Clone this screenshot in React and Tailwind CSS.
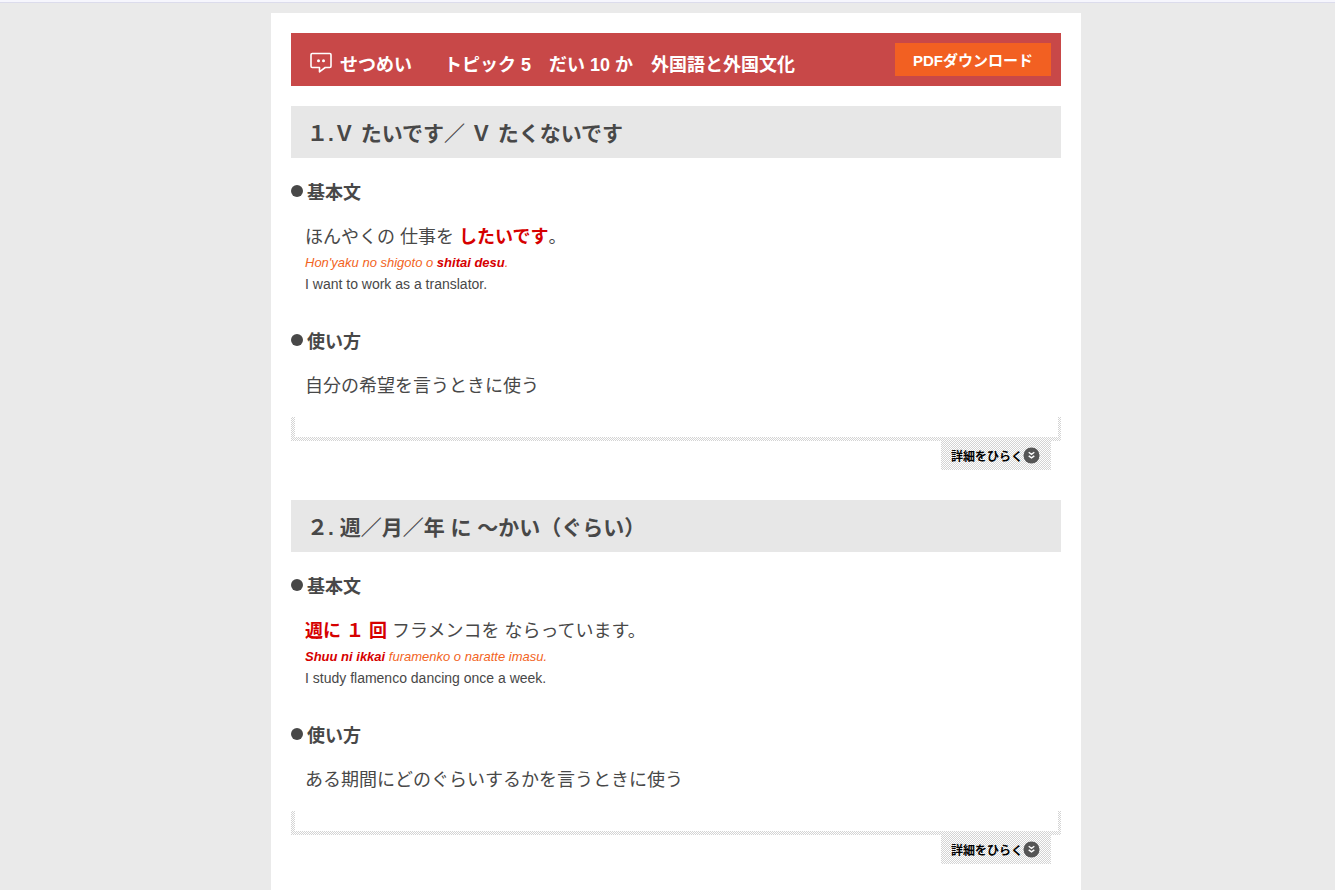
const lessons = [
  {
    id: "tai",
    title: "１.Ｖ たいです／ Ｖ たくないです",
    sentence: (
      <>
        ほんやくの 仕事を <b className="text-[#d60000]">したいです</b>。
      </>
    ),
    romaji: (
      <>
        Hon'yaku no shigoto o <b className="text-[#d60000]">shitai desu</b>.
      </>
    ),
    english: "I want to work as a translator.",
    usage: "自分の希望を言うときに使う",
  },
  {
    id: "kai",
    title: "２. 週／月／年 に ～かい（ぐらい）",
    sentence: (
      <>
        <b className="text-[#d60000]">週に １ 回</b> フラメンコを ならっています。
      </>
    ),
    romaji: (
      <>
        <b className="text-[#d60000]">Shuu ni ikkai</b> furamenko o naratte imasu.
      </>
    ),
    english: "I study flamenco dancing once a week.",
    usage: "ある期間にどのぐらいするかを言うときに使う",
  },
];

const checker =
  "bg-[conic-gradient(#d4d4d4_25%,#fff_0_50%,#d4d4d4_0_75%,#fff_0)] bg-[size:2px_2px]";

function SpeechIcon() {
  return (
    <svg viewBox="0 0 22 22" className="mt-2 h-[22px] w-[22px] shrink-0" aria-hidden="true">
      <path
        d="M2.2 2.500h17.6a1.200 1.200 0 0 1 1.200 1.200v11.600a1.200 1.200 0 0 1-1.200 1.200h-4.600L9.500 20.800V16.500H2.200A1.200 1.200 0 0 1 1 15.300V3.700A1.200 1.200 0 0 1 2.200 2.500z"
        fill="none"
        stroke="#fff"
        strokeWidth="1.6"
        strokeLinejoin="round"
      />
      <circle cx="8.500" cy="9.700" r="1.500" fill="#fff" />
      <circle cx="13.500" cy="9.700" r="1.500" fill="#fff" />
    </svg>
  );
}

function OpenIcon() {
  return (
    <svg viewBox="0 0 17 17" className="h-[17px] w-[17px] shrink-0" aria-hidden="true">
      <circle cx="8.500" cy="8.500" r="8" fill="#555" />
      <path
        d="M5.700 5.300 8.500 7.300l2.800-2M5.700 8.900l2.800 2 2.800-2"
        fill="none"
        stroke="#fff"
        strokeWidth="1.4"
      />
    </svg>
  );
}

function SubHeading({ children }) {
  return (
    <h3 className="flex items-start gap-1 text-[18px] leading-[31px] font-bold">
      <span className="mt-[7px] h-3 w-3 rounded-full bg-[#484848]" />
      {children}
    </h3>
  );
}

function Lesson({ lesson }) {
  return (
    <section className="mb-[30px]">
      <h2 className="bg-[#e7e7e7] px-4 pt-3 pb-2 text-[21px] leading-8 font-bold">{lesson.title}</h2>

      <div className="mt-5">
        <SubHeading>基本文</SubHeading>
        <div className="mt-[15px] px-[14px]">
          <p className="text-[18px] leading-[27px]">{lesson.sentence}</p>
          <p className="text-[13px] leading-6 text-[#f26322] italic">{lesson.romaji}</p>
          <p className="text-[14px] leading-[18px]">{lesson.english}</p>
        </div>
      </div>

      <div className="mt-[34px]">
        <SubHeading>使い方</SubHeading>
        <p className="mt-[15px] px-[14px] text-[18px] leading-[27px]">{lesson.usage}</p>
      </div>

      <div className={`mt-[17px] pr-[3px] pb-1 pl-1 ${checker}`}>
        <div className="h-5 bg-white" />
      </div>
      <div className="flex justify-end pr-[10px]">
        <button
          type="button"
          className={`flex h-[29px] items-center pr-[11px] pl-[10px] text-[12px] font-bold text-black ${checker}`}
        >
          <span className="pt-0.5">詳細をひらく</span>
          <OpenIcon />
        </button>
      </div>
    </section>
  );
}

export default function App() {
  return (
    <div
      lang="ja"
      className="min-h-screen bg-[#eaeaea] font-['Liberation_Sans','Noto_Sans_CJK_JP',sans-serif] text-[#484848]"
    >
      <div className="h-[3px] border-b border-[#dcdcec] bg-[#f6f6fd]" />
      <div className="pt-[10px] pl-[17px]">
        <main className="mx-auto max-w-[810px] bg-white p-5">
          <header className="flex items-start justify-between bg-[#c84848] p-[10px] text-white">
            <h1 className="flex items-start pl-[9px] text-[18px] leading-[22px] font-bold">
              <SpeechIcon />
              <span className="pt-[11px] pl-2">せつめい</span>
              <span className="pt-[11px] pl-8">トピック 5　だい 10 か　外国語と外国文化</span>
            </h1>
            <a href="#pdf" className="bg-[#f26022] px-[18px] pt-[5px] pb-[3px] text-[15px] leading-[25px] font-bold">
              PDFダウンロード
            </a>
          </header>

          <div className="mt-5">
            {lessons.map((lesson) => (
              <Lesson key={lesson.id} lesson={lesson} />
            ))}
          </div>
        </main>
      </div>
    </div>
  );
}
